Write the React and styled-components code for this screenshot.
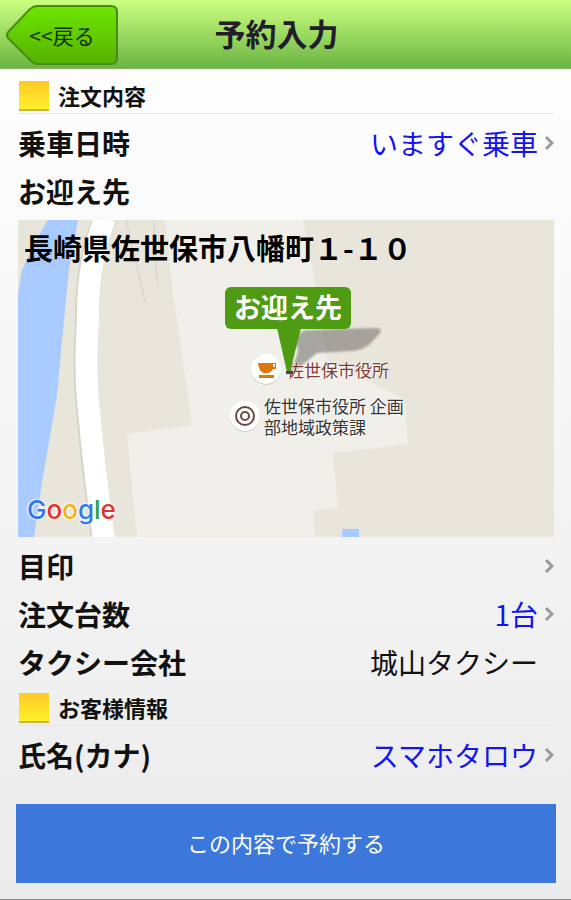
import React from "react";
import styled, { createGlobalStyle } from "styled-components";

const App = () => {
    return (
        <Page>
            <GlobalStyle />
            <Header>
                <BackButton type="button">
                    <BackShape viewBox="0 0 112 60" aria-hidden="true">
                        <defs>
                            <linearGradient id="backFill" x1="0" y1="0" x2="0" y2="1">
                                <stop offset="0" stopColor="#6fe602" />
                                <stop offset="1" stopColor="#55b000" />
                            </linearGradient>
                        </defs>
                        <path
                            d="M2 27 L24 4 Q28 1 31 1 H105 Q111 1 111 7 V53 Q111 59 105 59 H31 Q28 59 25 56 L2 33 Q0 30 2 27 Z"
                            fill="url(#backFill)"
                            stroke="#4a8a16"
                            strokeWidth="2"
                        />
                    </BackShape>
                    <BackText>&lt;&lt;戻る</BackText>
                </BackButton>
                <Title>予約入力</Title>
            </Header>
            <Content>
                <Section title="注文内容" />
                <Item label="乗車日時" value="いますぐ乗車" link />
                <Item label="お迎え先" />
                <PickupMap />
                <Item label="目印" link />
                <Item label="注文台数" value="1台" link />
                <Item label="タクシー会社" value="城山タクシー" />
                <Section title="お客様情報" />
                <Item label="氏名(カナ)" value="スマホタロウ" link />
            </Content>
            <Submit type="button">この内容で予約する</Submit>
        </Page>
    );
};

export default App;

const Section = ({ title }) => (
    <SectionHead>
        <Square />
        <SectionTitle>{title}</SectionTitle>
    </SectionHead>
);

const Item = ({ label, value, link }) => (
    <Row>
        <Label>{label}</Label>
        {link && (
            <ValueButton type="button" aria-label={value ? undefined : label}>
                {value}
                <Chevron />
            </ValueButton>
        )}
        {!link && value ? <Value>{value}</Value> : null}
    </Row>
);

const Chevron = () => (
    <svg width="10" height="16" viewBox="0 0 10 16" aria-hidden="true">
        <path d="M2 2 L8 8 L2 14" fill="none" stroke="#9a9a9a" strokeWidth="3" />
    </svg>
);

const PickupMap = () => (
    <MapBox>
        <MapDrawing viewBox="0 0 536 317" preserveAspectRatio="xMidYMid slice" aria-hidden="true">
            <defs>
                <filter id="soft" x="-10%" y="-20%" width="120%" height="140%">
                    <feGaussianBlur stdDeviation="1" />
                </filter>
            </defs>
            <rect width="536" height="317" fill="#e8e6da" />
            <path
                d="M147 0 L155 73 L164 135 L174 205 L109 214 L119 317 H297 L295 291 L320 288 L315 233 L390 224 L387 180 L309 140 L303 95 L285 0 Z"
                fill="#f0efea"
            />
            <path
                d="M30 0 L17 22 L4 50 L0 74 V317 H16 L24 263 L39 175 L45 110 L51 50 L60 0 Z"
                fill="#a9cbff"
            />
            <path
                d="M87 -2 Q68 45 69 100 Q66 145 69 180 Q75 250 85 319"
                fill="none"
                stroke="#d7d5ca"
                strokeWidth="24"
            />
            <path
                d="M87 -2 Q69 45 70 100 Q67 145 70 180 Q76 250 86 319"
                fill="none"
                stroke="#ffffff"
                strokeWidth="22"
            />
            <path
                d="M108 0 L118 42 L127 82 M136 0 L137 40 L140 66"
                fill="none"
                stroke="#d3d1c7"
                strokeWidth="1"
            />
            <rect x="324" y="309" width="17" height="8" fill="#a9cbff" />
            <path
                d="M278 119 Q282 109 292 110 L357 108 Q365 108 362 113 L352 124 Q343 131 333 131 L299 133 L272 155 L280 132 Z"
                fill="#77756f"
                opacity="0.6"
                filter="url(#soft)"
            />
            <circle cx="248" cy="150" r="15" fill="#cfcdc4" />
            <circle cx="248" cy="149" r="15" fill="#ffffff" />
            <path
                d="M240 143 H258 V149 H255 Q253 153 249 153 H246 Q241 152 240 143 Z M241 155 H256 V158 H241 Z"
                fill="#e2740c"
            />
            <path d="M255 144 H257 V147 H255 Z" fill="#ffffff" />
            <circle cx="227" cy="197" r="15" fill="#cfcdc4" />
            <circle cx="227" cy="196" r="15" fill="#ffffff" />
            <circle cx="227" cy="196" r="9" fill="none" stroke="#6b4741" strokeWidth="2" />
            <circle cx="227" cy="196" r="4" fill="none" stroke="#6b4741" strokeWidth="2" />
        </MapDrawing>
        <Address>長崎県佐世保市八幡町１-１０</Address>
        <Overlay>
            <Place $x={269} $y={139} $color="#7d3a32">
                佐世保市役所
            </Place>
            <Place $x={246} $y={175} $color="#333333">
                佐世保市役所 企画
                <br />
                部地域政策課
            </Place>
            <Bubble>
                お迎え先
                <Pointer viewBox="0 0 24 46" aria-hidden="true">
                    <path d="M0 0 H24 L13 44 H10 Z" fill="#4f9c14" />
                    <path d="M9 43 H16 V46 H9 Z" fill="#454545" />
                </Pointer>
            </Bubble>
        </Overlay>
        <Logo>
            <Letter $color="#3079ed">G</Letter>
            <Letter $color="#e3342a">o</Letter>
            <Letter $color="#f2b50f">o</Letter>
            <Letter $color="#3079ed">g</Letter>
            <Letter $color="#2c9f45">l</Letter>
            <Letter $color="#e3342a">e</Letter>
        </Logo>
    </MapBox>
);

const GlobalStyle = createGlobalStyle`
    * {
        box-sizing: border-box;
    }
    body {
        margin: 0;
        background-color: #ebebeb;
        font-family: "Noto Sans CJK JP", sans-serif;
        color: #111111;
    }
    button {
        font-family: inherit;
        border: none;
        padding: 0;
        background: none;
        cursor: pointer;
    }
`;

const Page = styled.div`
    display: flex;
    flex-direction: column;
    min-height: 100vh;
    background: linear-gradient(#ffffff, #ebebeb);
    border-bottom: solid 1px #888888;
`;

const Header = styled.header`
    display: grid;
    grid-template-columns: 1fr auto 1fr;
    align-items: center;
    height: 69px;
    padding: 2px 24px 0 6px;
    background: linear-gradient(#ccff80, #6bb544);
    border-bottom: solid 1px #7fb663;
`;

const BackButton = styled.button`
    position: relative;
    justify-self: start;
    width: 112px;
    height: 60px;
    color: #123300;
`;

const BackShape = styled.svg`
    position: absolute;
    inset: 0;
    width: 100%;
    height: 100%;
`;

const BackText = styled.span`
    position: relative;
    font-size: 21px;
    line-height: 30px;
`;

const Title = styled.h1`
    margin: 0;
    padding-bottom: 4px;
    font-size: 31px;
    line-height: 40px;
    font-weight: bold;
    color: #231c2b;
`;

const Content = styled.main`
    padding: 6px 17px 0 18px;
`;

const SectionHead = styled.div`
    display: flex;
    align-items: flex-start;
    gap: 9px;
    padding: 6px 0 2px 1px;
    margin-bottom: 6px;
    border-bottom: solid 1px #e6e6e6;
`;

const Square = styled.div`
    width: 30px;
    height: 30px;
    background: linear-gradient(#ffc926, #fff12b);
    border-bottom: solid 2px #c9b544;
`;

const SectionTitle = styled.h2`
    margin: 0;
    font-size: 22px;
    line-height: 28px;
    font-weight: bold;
`;

const Row = styled.div`
    display: flex;
    align-items: center;
    justify-content: space-between;
    height: 48px;
    padding-bottom: 2px;
    font-size: 28px;
    line-height: 40px;
`;

const Label = styled.div`
    font-weight: bold;
`;

const Value = styled.div`
    padding-right: 16px;
`;

const ValueButton = styled.button`
    display: flex;
    align-items: center;
    gap: 6px;
    font-size: 28px;
    line-height: 40px;
    color: #1414f0;
`;

const MapBox = styled.div`
    position: relative;
    height: 317px;
    margin: 4px 0 6px;
    overflow: hidden;
`;

const MapDrawing = styled.svg`
    display: block;
    width: 100%;
    height: 100%;
`;

const Address = styled.div`
    position: absolute;
    left: 6px;
    top: 7px;
    font-size: 29px;
    line-height: 40px;
    font-weight: bold;
    color: #000000;
`;

const Overlay = styled.div`
    position: absolute;
    top: 0;
    left: calc(50% - 268px);
`;

const Place = styled.div`
    position: absolute;
    left: ${({ $x }) => $x}px;
    top: ${({ $y }) => $y}px;
    font-size: 17px;
    line-height: 21px;
    white-space: nowrap;
    color: ${({ $color }) => $color};
    text-shadow: 0 0 2px #ffffff, 0 0 2px #ffffff;
`;

const Bubble = styled.div`
    position: absolute;
    left: 207px;
    top: 67px;
    width: 126px;
    height: 42px;
    border-radius: 6px;
    background-color: #4f9c14;
    color: #ffffff;
    font-size: 27px;
    line-height: 40px;
    font-weight: bold;
    text-align: center;
    white-space: nowrap;
`;

const Pointer = styled.svg`
    position: absolute;
    left: 52px;
    top: 41px;
    width: 24px;
    height: 46px;
`;

const Logo = styled.div`
    position: absolute;
    left: 9px;
    top: 274px;
    font-family: Inter, sans-serif;
    font-size: 26px;
    line-height: 32px;
    font-weight: 500;
    text-shadow: 0 0 2px #ffffff, 0 0 2px #ffffff, 0 0 3px #ffffff;
`;

const Letter = styled.span`
    color: ${({ $color }) => $color};
`;

const Submit = styled.button`
    height: 79px;
    margin: 24px 15px 16px 16px;
    padding-bottom: 4px;
    background-color: #3c78dc;
    color: #ffffff;
    font-size: 22px;
    line-height: 30px;
`;
